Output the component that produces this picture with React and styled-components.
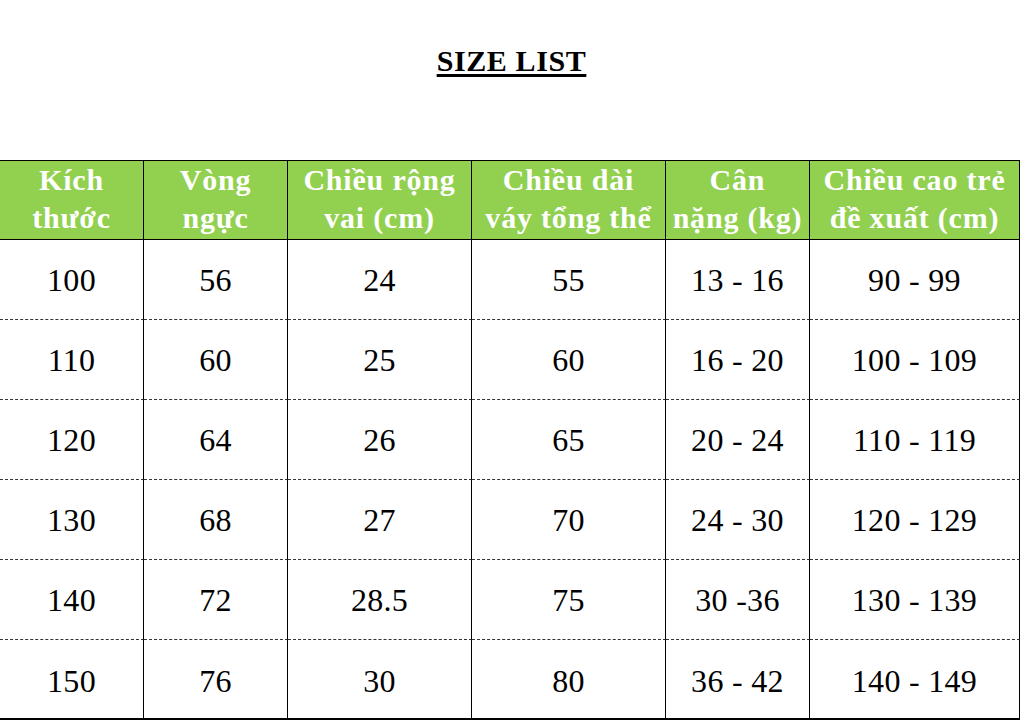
import React from 'react';
import styled, { createGlobalStyle } from 'styled-components';

const GlobalStyle = createGlobalStyle`
  html, body {
    margin: 0;
    padding: 0;
    background: #fff;
  }
  body {
    font-family: "Liberation Serif", "Times New Roman", serif;
    color: #000;
  }
`;

const Page = styled.div`
  width: 1022px;
  height: 721px;
  overflow: hidden;
`;

const TitleBar = styled.div`
  height: 160px;
  display: flex;
  justify-content: center;
  padding-top: 42px;
  box-sizing: border-box;
`;

const Title = styled.h1`
  margin: 0;
  font-size: 30px;
  line-height: 38px;
  font-weight: bold;
  text-decoration: underline;
  text-decoration-thickness: 3px;
  text-underline-offset: 3px;
  letter-spacing: 0.6px;
  padding-left: 1px;
`;

const Grid = styled.div`
  display: grid;
  grid-template-columns: 144px 144px 184px 194px 144px 210px;
  width: 1021px;
`;

const Cell = styled.div`
  height: 80px;
  box-sizing: border-box;
  display: flex;
  align-items: center;
  justify-content: center;
  text-align: center;
  white-space: nowrap;
  border-right: 1px solid #000;
`;

const HeadCell = styled(Cell)`
  background: #92d050;
  color: #fff;
  font-weight: bold;
  font-size: 30px;
  line-height: 38px;
  letter-spacing: 0.8px;
  border-top: 1px solid #000;
  border-bottom: 1px solid #000;
  padding-bottom: 2px;
`;

const BodyCell = styled(Cell)`
  font-size: 32px;
  letter-spacing: 0.3px;
  border-bottom: ${(p) => (p.$last ? '2px solid #000' : '1px dashed #333')};
  padding-top: ${(p) => (p.$last ? '4px' : '2px')};
`;

const headers = [
  ['Kích', 'thước'],
  ['Vòng', 'ngực'],
  ['Chiều rộng', 'vai (cm)'],
  ['Chiều dài', 'váy tổng thể'],
  ['Cân', 'nặng (kg)'],
  ['Chiều cao trẻ', 'đề xuất (cm)'],
];

const rows = [
  ['100', '56', '24', '55', '13 - 16', '90 - 99'],
  ['110', '60', '25', '60', '16 - 20', '100 - 109'],
  ['120', '64', '26', '65', '20 - 24', '110 - 119'],
  ['130', '68', '27', '70', '24 - 30', '120 - 129'],
  ['140', '72', '28.5', '75', '30 -36', '130 - 139'],
  ['150', '76', '30', '80', '36 - 42', '140 - 149'],
];

const App = () => (
  <Page>
    <GlobalStyle />
    <TitleBar>
      <Title>SIZE LIST</Title>
    </TitleBar>
    <Grid>
      {headers.map((h) => (
        <HeadCell key={h.join(' ')}>
          <div>
            {h[0]}
            <br />
            {h[1]}
          </div>
        </HeadCell>
      ))}
      {rows.map((row, ri) =>
        row.map((v, ci) => (
          <BodyCell key={`${ri}-${ci}`} $last={ri === rows.length - 1}>
            {v}
          </BodyCell>
        ))
      )}
    </Grid>
  </Page>
);

export default App;
